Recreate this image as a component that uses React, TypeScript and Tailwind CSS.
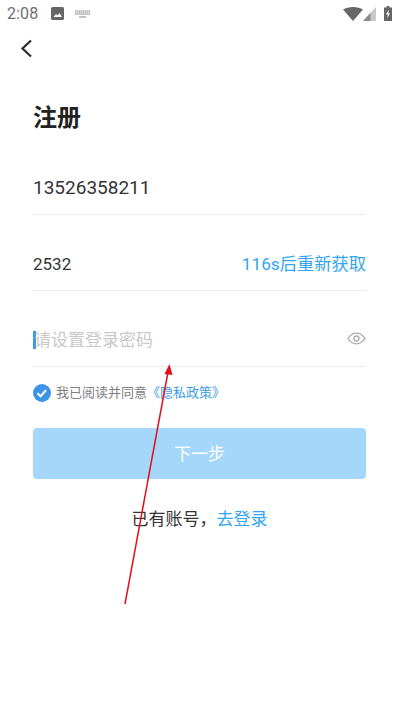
const font = { fontFamily: '"Roboto", "Noto Sans CJK SC", sans-serif' };

function StatusBar() {
  return (
    <div className="flex h-[27px] items-center justify-between pl-[7px] pr-[8px] text-[#6f6f6f]">
      <div className="flex items-center">
        <span className="text-[16px] leading-none tracking-[0.1px]">2:08</span>
        <svg className="ml-[13px]" width="13" height="13" viewBox="0 0 13 13">
          <rect width="13" height="13" rx="1.5" fill="#666" />
          <path d="M2.5 10l2.5-3 1.500 1.500L8.500 6l2.500 4z" fill="#fff" />
        </svg>
        <svg className="ml-[11px]" width="15" height="8" viewBox="0 0 15 8">
          <path d="M0 0h15v5H0z" fill="#c4c4c4" />
          <path d="M1 1h1M3 1h1M5 1h1M7 1h1M9 1h1M11 1h1M13 1h1M1 3h1M3 3h1M5 3h1M7 3h1M9 3h1M11 3h1M13 3h1" stroke="#fff" strokeWidth="0.7" />
          <path d="M4 6h7v2H4z" fill="#c4c4c4" />
        </svg>
      </div>
      <div className="flex items-center">
        <svg width="20" height="14" viewBox="0 0 20 14">
          <path d="M0 2.500C2.700.9 6.100 0 10 0s7.300.9 10 2.500L10 14z" fill="#666" />
        </svg>
        <svg className="ml-0" width="13" height="14" viewBox="0 0 13 14">
          <path d="M13 0v14H0z" fill="#c9c9c9" />
          <path d="M7.500 6v8H0z" fill="#8a8a8a" />
        </svg>
        <svg className="ml-[8px]" width="8" height="15" viewBox="0 0 8 15">
          <path d="M2.500 0h3v1.500H8V15H0V1.500h2.500z" fill="#666" />
          <path d="M4.800 3.500L2 8.500h1.800L3.200 12.500 6 7.300H4.200z" fill="#fff" />
        </svg>
      </div>
    </div>
  );
}

function Row({ children, height }: { children: React.ReactNode; height: string }) {
  return <div className={`flex items-end justify-between border-b border-[#ececec] pb-[14px] ${height}`}>{children}</div>;
}

export default function App() {
  return (
    <div className="relative h-[711px] w-[400px] overflow-hidden bg-white" style={font}>
      <StatusBar />
      <div className="flex h-[43px] items-center pl-[20px]">
        <svg width="13" height="19" viewBox="0 0 13 19" fill="none">
          <path d="M11 1.500L2.500 9.500l8.500 8" stroke="#2a2a2a" strokeWidth="2.200" />
        </svg>
      </div>
      <div className="pl-[33px] pr-[34px]">
        <h1 className="mt-[32px] text-[24px] leading-[32px] font-semibold text-[#222]">注册</h1>
        <div className="mt-[15px] flex flex-col">
          <Row height="h-[66px]">
            <span className="text-[19px] leading-[24px] text-[#333]">13526358211</span>
          </Row>
          <Row height="h-[76px]">
            <span className="text-[17px] leading-[24px] text-[#333]">2532</span>
            <span className="text-[17.25px] leading-[24px] text-[#33a5f1]">116s后重新获取</span>
          </Row>
          <Row height="h-[76px]">
            <div className="flex items-center">
              <span className="h-[18px] w-[3px] bg-[#3f9be8]" />
              <span className="ml-[-2px] text-[17px] leading-[24px] text-[#c9c9c9]">请设置登录密码</span>
            </div>
            <svg className="mb-[7px]" width="19" height="13" viewBox="0 0 19 13" fill="none" stroke="#aaa" strokeWidth="1.300">
              <path d="M1 6.500C3.200 3 6 1.200 9.500 1.200S15.800 3 18 6.500c-2.200 3.500-5 5.300-8.500 5.300S3.200 10 1 6.500z" />
              <circle cx="9.500" cy="6.500" r="2.500" />
            </svg>
          </Row>
        </div>
        <div className="mt-[16px] flex items-center">
          <svg width="18" height="18" viewBox="0 0 18 18">
            <circle cx="9" cy="9" r="9" fill="#3d94e6" />
            <path d="M4.500 9.200l3 3 5.500-6" stroke="#fff" strokeWidth="2" fill="none" />
          </svg>
          <span className="ml-[5px] text-[13px] text-[#808080]">我已阅读并同意</span>
          <span className="text-[13px] text-[#3c9be8]">《隐私政策》</span>
        </div>
        <button className="mt-[25px] flex h-[51px] w-full items-center justify-center rounded-[4px] bg-[#a5d7fb] pt-[4px] text-[17px] text-white">
          下一步
        </button>
        <div className="mt-[28px] text-center text-[17px] leading-[24px] text-[#333]">
          已有账号，<span className="text-[#33a5f1]">去登录</span>
        </div>
      </div>
      <svg className="absolute left-0 top-0" width="400" height="711" viewBox="0 0 400 711" fill="none">
        <path d="M125 604L168 372" stroke="#e0101a" strokeWidth="1.500" />
        <path d="M169.500 364L164.500 374L172.500 375z" fill="#e0101a" />
      </svg>
    </div>
  );
}
